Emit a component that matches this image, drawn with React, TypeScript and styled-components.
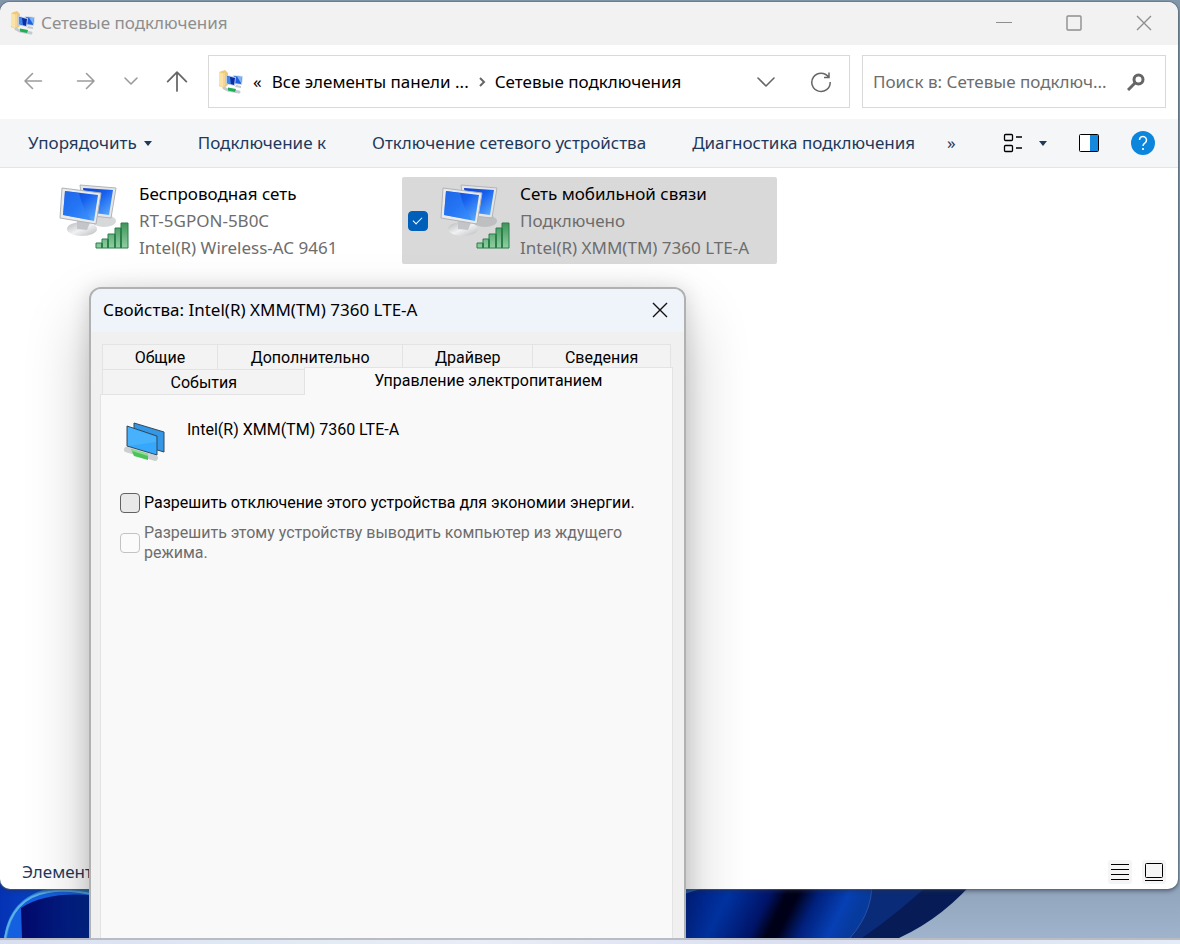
import React from 'react';
import styled, { createGlobalStyle, css } from 'styled-components';

const ui = '"Noto Sans", "Open Sans", sans-serif';
const dlg = 'Roboto, "Liberation Sans", sans-serif';

const Global = createGlobalStyle`
  *, *::before, *::after { box-sizing: border-box; }
  body { margin: 0; font-family: ${ui}; font-size: 17px; line-height: 24px; color: #000; }
  button, input { font: inherit; color: inherit; }
  button { border: 0; padding: 0; background: none; white-space: nowrap; }
  svg { display: block; flex: none; }
`;

const Screen = styled.div`
  height: 100vh;
  display: flex;
  flex-direction: column;
`;

const Desktop = styled.main`
  position: relative;
  flex: 1;
  min-height: 0;
  display: flex;
  padding: 2px 2px 49px 0;
  overflow: hidden;
  background: linear-gradient(180deg, #8397ab 0%, #7f96b0 60%, #8fa3ba 94%, #9fb4cc 100%);
`;

const Taskbar = styled.footer`
  height: 6px;
  border-top: 2px solid #b9bdc3;
  background: linear-gradient(90deg, #d9def0, #dfe9f3 20%, #e9edf5 40%, #d9def1 70%, #e3ecf7);
`;

const WallpaperArt = styled.svg`
  position: absolute;
  left: 0;
  bottom: 0;
  width: 100%;
  height: 64px;
`;

const Explorer = styled.section`
  position: relative;
  flex: 1;
  min-width: 0;
  display: flex;
  flex-direction: column;
  background: #fff;
  border-radius: 10px;
  overflow: hidden;
  box-shadow: 0 0 0 1px rgba(90, 105, 120, 0.5), 0 2px 4px rgba(40, 50, 70, 0.6);
`;

const TitleBar = styled.header`
  display: flex;
  align-items: center;
  height: 43px;
  padding: 0 26px 2px 11px;
  gap: 6px;
  background: #f2f2f2;
  color: #8e8e8e;
`;

const Title = styled.h1`
  flex: 1;
  margin: 0;
  font-size: 17px;
  font-weight: 400;
`;

const WindowButtons = styled.div`
  display: flex;
  gap: 54px;
`;

const NavBar = styled.nav`
  display: flex;
  align-items: center;
  height: 74px;
  padding: 0 12px 2px 10px;
`;

const NavButton = styled.button<{ $w: number }>`
  display: flex;
  justify-content: center;
  width: ${(p) => p.$w}px;
`;

const boxed = css`
  display: flex;
  align-items: center;
  height: 53px;
  border: 1px solid #d9d9d9;
  background: #fff;
`;

const AddressBar = styled.div`
  ${boxed}
  flex: 2 1 642px;
  min-width: 0;
  margin-right: 12px;
  padding: 1px 17px 0 10px;
`;

const Crumb = styled.button<{ $pad: number }>`
  padding: 0 ${(p) => p.$pad}px;
`;

const AddressTools = styled.div`
  display: flex;
  align-items: center;
  gap: 34px;
  margin-left: auto;
`;

const SearchBox = styled.label`
  ${boxed}
  flex: 1 1 304px;
  min-width: 0;
  padding: 1px 20px 0 10px;
`;

const SearchInput = styled.input`
  flex: 1;
  min-width: 0;
  border: 0;
  padding: 0;
  outline: 0;
  background: none;
  text-overflow: ellipsis;
  &::placeholder { color: #6d6d6d; opacity: 1; }
`;

const CommandBar = styled.div`
  display: flex;
  align-items: center;
  height: 49px;
  padding: 0 23px 0 28px;
  border-bottom: 1px solid #e5e5e7;
  background: #f4f6f8;
  color: #1e395b;
`;

const Command = styled.button<{ $gap?: number }>`
  display: flex;
  align-items: center;
  gap: 7px;
  margin-right: ${(p) => p.$gap ?? 46}px;
`;

const CommandTools = styled.div`
  display: flex;
  align-items: center;
  gap: 32px;
  margin-left: auto;
`;

const ViewButton = styled.button`
  display: flex;
  align-items: center;
  gap: 16px;
`;

const Connections = styled.ul`
  flex: 1;
  display: flex;
  align-items: flex-start;
  gap: 6px;
  margin: 0;
  padding: 9px 21px;
  list-style: none;
`;

const Connection = styled.li<{ $selected?: boolean }>`
  width: 375px;
  height: 87px;
  display: flex;
  align-items: center;
  padding-left: 6px;
  border-radius: 2px;
  background: ${(p) => (p.$selected ? '#d9d9d9' : 'transparent')};
`;

const CheckSlot = styled.span`
  display: flex;
  width: 32px;
`;

const Picture = styled.span`
  padding-bottom: 6px;
`;

const Details = styled.div`
  margin-left: 10px;
  line-height: 27px;
  white-space: nowrap;
  color: #6d6d6d;
`;

const ConnectionName = styled.div`
  color: #000;
`;

const Check = styled.input<{ $tone: 'accent' | 'plain' | 'faint' }>`
  appearance: none;
  flex: none;
  width: 20px;
  height: 20px;
  margin: 0;
  border-radius: 4px;
  border: 1px solid ${(p) => ({ accent: '#005fb8', plain: '#626262', faint: '#c3c3c3' })[p.$tone]};
  background: ${(p) => ({ accent: '#005fb8', plain: '#e9e9e9', faint: '#fbfbfb' })[p.$tone]};
  &:checked::after {
    content: '';
    display: block;
    width: 9px;
    height: 5px;
    margin: 5px 0 0 4px;
    border: solid #fff;
    border-width: 0 0 1px 1px;
    transform: rotate(-45deg);
  }
`;

const StatusBar = styled.footer`
  display: flex;
  align-items: center;
  height: 36px;
  padding: 2px 12px 0 22px;
  color: #1e395b;
`;

const ViewSwitch = styled.div`
  display: flex;
  gap: 10px;
  margin-left: auto;
`;

const ViewOption = styled.button`
  padding: 2px;
  border-radius: 3px;
  background: #f5f5f5;
`;

const Dialog = styled.section`
  position: absolute;
  left: 89px;
  top: 287px;
  bottom: 0;
  width: 597px;
  display: flex;
  flex-direction: column;
  border: 2px solid #b0b2b2;
  border-bottom: 0;
  border-radius: 12px 12px 0 0;
  overflow: hidden;
  background: #f0f0f0;
  font-family: ${dlg};
  font-size: 16px;
  line-height: 20px;
  box-shadow: 0 32px 64px rgba(0, 0, 0, 0.24), 0 2px 21px rgba(0, 0, 0, 0.15);
`;

const DialogHeader = styled.header`
  display: flex;
  align-items: center;
  justify-content: space-between;
  height: 43px;
  padding: 0 16px 2px 12px;
  background: #eff3fa;
  font-family: ${ui};
`;

const DialogTitle = styled.h2`
  margin: 0;
  font-size: 17px;
  font-weight: 400;
`;

const Tabs = styled.div`
  padding: 12px 13px 0 11px;
`;

const TabRow = styled.div<{ $front?: boolean }>`
  display: flex;
  margin-right: ${(p) => (p.$front ? '-2px' : '0')};
`;

const Tab = styled.button<{ $grow: number; $active?: boolean }>`
  flex: ${(p) => p.$grow} 0 0;
  height: 25px;
  padding-top: 1px;
  border: 1px solid #e3e3e3;
  border-width: 1px 0 0 1px;
  background: #f3f3f3;
  &:last-child { border-right-width: 1px; }
  ${(p) =>
    p.$active &&
    css`
      position: relative;
      height: 28px;
      margin: -2px 0 -1px;
      padding: 0 0 2px;
      background: #f9f9f9;
      box-shadow: -1px 0 0 #e3e3e3;
      border-left-width: 0;
      clip-path: inset(0 0 0 -1px);
    `}
`;

const Panel = styled.div`
  flex: 1;
  margin: 0 11px 0 9px;
  padding: 27px 20px 0 19px;
  border: 1px solid #e3e3e3;
  border-bottom: 0;
  background: #f9f9f9;
`;

const Device = styled.div`
  display: flex;
  gap: 21px;
  margin-bottom: 31px;
  padding-left: 4px;
`;

const DeviceName = styled.div`
  margin-top: -2px;
`;

const Option = styled.label<{ $off?: boolean }>`
  display: flex;
  align-items: center;
  gap: 4px;
  margin-bottom: 10px;
  color: ${(p) => (p.$off ? '#6d6d6d' : '#000')};
`;

const FolderNet = () => (
  <svg width="24" height="24" viewBox="0 0 24 24">
    <path d="M0 2l6-2 3 3v12l-4 3-5-2z" fill="#efc878" />
    <path d="M0 2l4 1.500v14L0 15z" fill="#fbe3a8" />
    <path d="M4 3.500l2-1v13l-2 2z" fill="#f6d893" />
    <path d="M14 5l10 1-1 9-9-1z" fill="#ccd8ea" />
    <path d="M15 6l8 1-1 7-7-1z" fill="#1f5fdd" />
    <path d="M18 6.500l5 .5-1 6z" fill="#7db4f5" />
    <path d="M7 5l10 2-1 9-9-2z" fill="#bccbe6" />
    <path d="M8 6l8 2-1 7-7-2z" fill="#0a2da4" />
    <path d="M8 6l3 1 1 7-4-1z" fill="#3f86ea" />
    <path d="M17 15l5 1v2l-6-1z" fill="#c6cad0" />
    <path d="M5 18l4 2 11 2" fill="none" stroke="#c3cad0" strokeWidth="3" strokeLinecap="round" />
    <path d="M9 17.500l8 1.500-1 3-7-1.500z" fill="#1fae54" />
  </svg>
);

const Computers = () => (
  <svg width="70" height="68" viewBox="0 0 70 68">
    <defs>
      <linearGradient id="scr" x1="0" y1="0" x2="1" y2="1">
        <stop offset="0" stopColor="#0a3fd0" />
        <stop offset=".45" stopColor="#1660ee" />
        <stop offset="1" stopColor="#5fb2ff" />
      </linearGradient>
      <linearGradient id="bars" x1="0" y1="0" x2="0" y2="1">
        <stop offset="0" stopColor="#3f9459" />
        <stop offset="1" stopColor="#8fd0a2" />
      </linearGradient>
      <linearGradient id="base" x1="0" y1="0" x2="1" y2="1">
        <stop offset="0" stopColor="#b5b7ba" />
        <stop offset=".5" stopColor="#f0f1f2" />
        <stop offset="1" stopColor="#b9bbbd" />
      </linearGradient>
    </defs>
    <ellipse cx="45" cy="37" rx="12" ry="6" fill="#8d8f92" opacity=".35" />
    <path d="M21 1l36 3-5 30-27-3z" fill="#e4e5e7" stroke="#b2b5b9" />
    <path d="M24 4l30 2-4 25-22-3z" fill="url(#scr)" />
    <ellipse cx="23" cy="45" rx="15" ry="7" fill="url(#base)" />
    <path d="M18 35l14 1-4 10-10-1z" fill="#c3c5c8" />
    <path d="M3 4l39 5-5 31L1 34z" fill="#e9eaec" stroke="#b0b3b7" />
    <path d="M6 7l33 4-4 26-31-6z" fill="url(#scr)" />
    <path d="M6 7l14 2q3 14 12 27l-28-5z" fill="#2f86fa" opacity=".55" />
    <path d="M37 64v-5h6v-4h6v-5h7v-6h6v-5h7v25z" fill="url(#bars)" stroke="#2b7f4a" />
    <path d="M43 59v5M49 55v9M56 50v14M62 44v20" stroke="#2b7f4a" strokeWidth="2" />
  </svg>
);

const Adapter = () => (
  <svg width="42" height="40" viewBox="0 0 42 40">
    <path d="M10 1l30 9v20l-30-9z" fill="#3397e6" stroke="#32485c" />
    <path d="M3 27.500l28 8.500" stroke="#cdd0d0" strokeWidth="6" strokeLinecap="round" />
    <path d="M3 4l30 10v19L3 24z" fill="#35a8fb" stroke="#32485c" />
    <path d="M4 5l28 10v5L4 24z" fill="#55b8fd" opacity=".6" />
    <path d="M7 27l17 5v6L10 34z" fill="#4cc35a" />
    <path d="M7 27l17 5v2L8 29z" fill="#8ae08c" />
  </svg>
);

const Arrow = ({ d, c, size = 20 }: { d: string; c: string; size?: number }) => (
  <svg width={size} height={size} viewBox="0 0 20 20" fill="none" stroke={c} strokeWidth="1.6" strokeLinecap="round" strokeLinejoin="round">
    <path d={d} />
  </svg>
);

const Caret = () => (
  <svg width="8" height="5" viewBox="0 0 8 5">
    <path d="M0 0h8L4 5z" fill="#1e395b" />
  </svg>
);

const CloseIcon = ({ c }: { c: string }) => (
  <svg width="16" height="16" viewBox="0 0 16 16" stroke={c} strokeWidth="1.4">
    <path d="M1 1l14 14M15 1L1 15" />
  </svg>
);

export default function App() {
  return (
    <Screen>
      <Global />
      <Desktop>
        <WallpaperArt viewBox="0 0 1180 64" preserveAspectRatio="none">
          <defs>
            <linearGradient id="bl" x1="0" x2=".2">
              <stop offset="0" stopColor="#0532b4" />
              <stop offset="1" stopColor="#0a5fe0" />
            </linearGradient>
            <linearGradient id="in" x1="0" x2="1">
              <stop offset="0" stopColor="#03096a" />
              <stop offset="1" stopColor="#012c96" />
            </linearGradient>
            <linearGradient id="rt" x1="690" y1="0" x2="840" y2="75" gradientUnits="userSpaceOnUse">
              <stop offset="0" stopColor="#01208a" />
              <stop offset=".26" stopColor="#0034a4" />
              <stop offset=".48" stopColor="#001468" />
              <stop offset=".57" stopColor="#000018" />
              <stop offset=".63" stopColor="#000018" />
              <stop offset=".74" stopColor="#00207c" />
              <stop offset=".9" stopColor="#0640b4" />
              <stop offset="1" stopColor="#063a9c" />
            </linearGradient>
          </defs>
          <path d="M0 0H500V64H0z" fill="url(#bl)" />
          <path d="M4 64Q10 18 60 13H100V64z" fill="#2c86d4" />
          <path d="M7 64Q13 26 45 18Q66 12 100 22V64z" fill="#1560e0" />
          <path d="M5 64Q12 24 48 18Q68 14 100 22" fill="none" stroke="#5bb0e8" strokeWidth="2" />
          <path d="M22 64L21 34Q48 16 100 22V64z" fill="url(#in)" />
          <path d="M600 0H980Q945 43 899 64H600z" fill="#071c56" />
          <path d="M600 0H940Q900 38 862 64H600z" fill="#0a2c78" />
          <path d="M600 0H871Q876 34 850 64H600z" fill="url(#rt)" />
          <path d="M871 0Q876 34 850 64" fill="none" stroke="#2a50a8" />
          <path d="M684 20L704 14H684z" fill="#2a72c4" />
        </WallpaperArt>

        <Explorer>
          <TitleBar>
            <FolderNet />
            <Title>Сетевые подключения</Title>
            <WindowButtons>
              <button aria-label="Свернуть">
                <svg width="16" height="16" viewBox="0 0 16 16" stroke="#8e8e8e"><path d="M0 7.500h16" /></svg>
              </button>
              <button aria-label="Развернуть">
                <svg width="16" height="16" viewBox="0 0 16 16" fill="none" stroke="#8e8e8e" strokeWidth="1.4"><rect x="1" y="1" width="14" height="14" rx="1" /></svg>
              </button>
              <button aria-label="Закрыть"><CloseIcon c="#8e8e8e" /></button>
            </WindowButtons>
          </TitleBar>

          <NavBar>
            <NavButton $w={46} aria-label="Назад"><Arrow c="#9c9c9c" d="M18.500 10H2M9.500 2.500L2 10l7.500 7.500" /></NavButton>
            <NavButton $w={60} aria-label="Вперед"><Arrow c="#9c9c9c" d="M1.500 10H18M10.500 2.500L18 10l-7.500 7.500" /></NavButton>
            <NavButton $w={30} aria-label="Последние"><Arrow c="#9c9c9c" d="M4 7l6 6 6-6" /></NavButton>
            <NavButton $w={62} aria-label="Вверх"><Arrow c="#666" size={22} d="M10 19V2M1.500 10.500L10 2l8.500 8.500" /></NavButton>
            <AddressBar>
              <FolderNet />
              <Crumb $pad={10}>«</Crumb>
              <span>Все элементы панели ...</span>
              <Crumb $pad={7} aria-label="Раздел">
                <svg width="12" height="12" viewBox="0 0 12 12" fill="none" stroke="#666" strokeWidth="2"><path d="M4 2l4 4-4 4" /></svg>
              </Crumb>
              <span>Сетевые подключения</span>
              <AddressTools>
                <Arrow c="#666" size={20} d="M2 6l8 8 8-8" />
                <svg width="22" height="22" viewBox="0 0 22 22" fill="none" stroke="#666" strokeWidth="1.500">
                  <path d="M18.500 6A9.200 9.200 0 1 0 20.200 11M19 1.500V6.500H14" />
                </svg>
              </AddressTools>
            </AddressBar>
            <SearchBox>
              <SearchInput placeholder="Поиск в: Сетевые подключ..." aria-label="Поиск" />
              <svg width="18" height="18" viewBox="0 0 18 18" fill="none" stroke="#666" strokeWidth="3">
                <circle cx="11.500" cy="6.500" r="4.500" />
                <path d="M8 10l-7 7" />
              </svg>
            </SearchBox>
          </NavBar>

          <CommandBar>
            <Command>Упорядочить <Caret /></Command>
            <Command>Подключение к</Command>
            <Command>Отключение сетевого устройства</Command>
            <Command $gap={32}>Диагностика подключения</Command>
            <Command $gap={0} aria-label="Ещё">»</Command>
            <CommandTools>
              <ViewButton aria-label="Вид">
                <svg width="20" height="20" viewBox="0 0 20 20" fill="none" stroke="#000" strokeWidth="1.300">
                  <rect x="1.500" y="1.500" width="8" height="6" rx="1" />
                  <rect x="1.500" y="12.500" width="8" height="6" rx="1" />
                  <path d="M13 4h6M13 15h6" />
                </svg>
                <Caret />
              </ViewButton>
              <button aria-label="Область просмотра">
                <svg width="20" height="18" viewBox="0 0 20 18">
                  <rect x=".5" y=".5" width="19" height="17" rx="1" fill="#fff" />
                  <path d="M11 1h8v16h-8z" fill="#1488dc" />
                  <rect x=".5" y=".5" width="19" height="17" rx="1" fill="none" stroke="#000" />
                </svg>
              </button>
              <button aria-label="Справка">
                <svg width="24" height="24" viewBox="0 0 24 24" fill="none">
                  <circle cx="12" cy="12" r="12" fill="#0c86dc" />
                  <path d="M8.500 9a3.500 3.500 0 1 1 5.500 2.800Q12 13 12 15" stroke="#fff" strokeWidth="1.500" />
                  <circle cx="12" cy="18" r="1.100" fill="#fff" />
                </svg>
              </button>
            </CommandTools>
          </CommandBar>

          <Connections>
            <Connection>
              <CheckSlot />
              <Picture><Computers /></Picture>
              <Details>
                <ConnectionName>Беспроводная сеть</ConnectionName>
                <div>RT-5GPON-5B0C</div>
                <div>Intel(R) Wireless-AC 9461</div>
              </Details>
            </Connection>
            <Connection $selected>
              <CheckSlot>
                <Check type="checkbox" $tone="accent" defaultChecked aria-label="Сеть мобильной связи" />
              </CheckSlot>
              <Picture><Computers /></Picture>
              <Details>
                <ConnectionName>Сеть мобильной связи</ConnectionName>
                <div>Подключено</div>
                <div>Intel(R) XMM(TM) 7360 LTE-A</div>
              </Details>
            </Connection>
          </Connections>

          <StatusBar>
            <span>Элемент</span>
            <ViewSwitch>
              <ViewOption aria-label="Таблица">
                <svg width="20" height="20" viewBox="0 0 20 20" stroke="#000"><path d="M1 2.500h18M1 7.500h18M1 12.500h18M1 17.500h18" /></svg>
              </ViewOption>
              <ViewOption aria-label="Крупные значки">
                <svg width="20" height="20" viewBox="0 0 20 20" fill="none" stroke="#000"><rect x="1.500" y="1.500" width="17" height="14" rx="1" /><path d="M1 18.500h18" /></svg>
              </ViewOption>
            </ViewSwitch>
          </StatusBar>
        </Explorer>

        <Dialog role="dialog" aria-label="Свойства">
          <DialogHeader>
            <DialogTitle>Свойства: Intel(R) XMM(TM) 7360 LTE-A</DialogTitle>
            <button aria-label="Закрыть"><CloseIcon c="#111" /></button>
          </DialogHeader>
          <Tabs>
            <TabRow>
              <Tab $grow={115}>Общие</Tab>
              <Tab $grow={186}>Дополнительно</Tab>
              <Tab $grow={130}>Драйвер</Tab>
              <Tab $grow={138}>Сведения</Tab>
            </TabRow>
            <TabRow $front>
              <Tab $grow={202}>События</Tab>
              <Tab $grow={368} $active>Управление электропитанием</Tab>
            </TabRow>
          </Tabs>
          <Panel>
            <Device>
              <Adapter />
              <DeviceName>Intel(R) XMM(TM) 7360 LTE-A</DeviceName>
            </Device>
            <Option>
              <Check type="checkbox" $tone="plain" />
              <span>Разрешить отключение этого устройства для экономии энергии.</span>
            </Option>
            <Option $off>
              <Check type="checkbox" $tone="faint" disabled />
              <span>Разрешить этому устройству выводить компьютер из ждущего режима.</span>
            </Option>
          </Panel>
        </Dialog>
      </Desktop>
      <Taskbar />
    </Screen>
  );
}
